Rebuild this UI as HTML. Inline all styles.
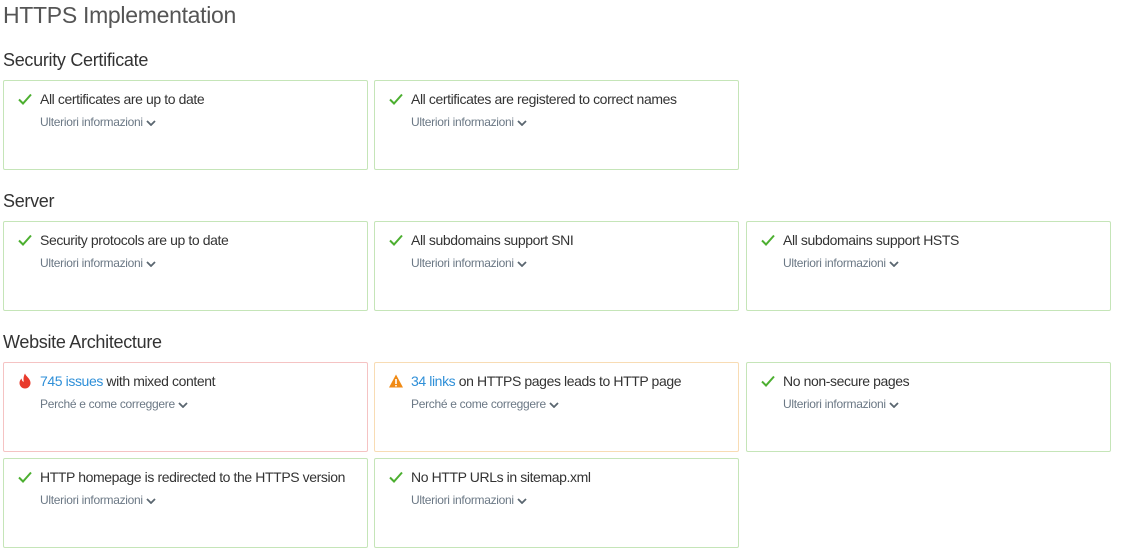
<!DOCTYPE html>
<html><head><style>
body{margin:0;width:1139px;height:525px;overflow:hidden;background:#fff;font-family:"Liberation Sans",sans-serif;color:#333;position:relative}
.t{position:absolute;left:3px;top:2px;font-size:23px;font-weight:300;color:#555;letter-spacing:-0.3px}
.h{position:absolute;left:3px;font-size:18px;color:#333;letter-spacing:-0.3px}
.c{position:absolute;width:363px;height:88px;border:1px solid #c5e5b8;border-radius:2px;box-sizing:content-box}
.c.r{border-color:#f5c3c3}.c.o{border-color:#f8dcb4}
.c .i{position:absolute;left:13px;top:10px;width:16px;height:16px}
.c .m{position:absolute;left:36px;top:10px;font-size:14px;color:#333;letter-spacing:-0.4px;white-space:nowrap}
.c .m a{color:#2e8fd8}
.c .s{position:absolute;left:36px;top:34px;font-size:12px;color:#6b7885;letter-spacing:-0.3px;white-space:nowrap}
.s svg{vertical-align:middle;margin-left:3px}
</style></head><body>
<div class="t">HTTPS Implementation</div>
<div class="h" style="top:50px">Security Certificate</div>
<div class="h" style="top:191px">Server</div>
<div class="h" style="top:332px">Website Architecture</div>

<svg width="0" height="0" style="position:absolute"><defs>
<symbol id="ck" viewBox="0 0 16 16"><path d="M2 8.5l4 4 8-9" fill="none" stroke="#4caf30" stroke-width="2"/></symbol>
<symbol id="dn" viewBox="0 0 10 6"><path d="M1 1l4 4 4-4" fill="none" stroke="#5a6670" stroke-width="1.8"/></symbol>
</defs></svg>

<div class="c" style="left:3px;top:80px"><svg class="i"><use href="#ck"/></svg><div class="m">All certificates are up to date</div><div class="s">Ulteriori informazioni<svg width="10" height="6"><use href="#dn"/></svg></div></div>
<div class="c" style="left:374px;top:80px"><svg class="i"><use href="#ck"/></svg><div class="m">All certificates are registered to correct names</div><div class="s">Ulteriori informazioni<svg width="10" height="6"><use href="#dn"/></svg></div></div>

<div class="c" style="left:3px;top:221px"><svg class="i"><use href="#ck"/></svg><div class="m">Security protocols are up to date</div><div class="s">Ulteriori informazioni<svg width="10" height="6"><use href="#dn"/></svg></div></div>
<div class="c" style="left:374px;top:221px"><svg class="i"><use href="#ck"/></svg><div class="m">All subdomains support SNI</div><div class="s">Ulteriori informazioni<svg width="10" height="6"><use href="#dn"/></svg></div></div>
<div class="c" style="left:746px;top:221px"><svg class="i"><use href="#ck"/></svg><div class="m">All subdomains support HSTS</div><div class="s">Ulteriori informazioni<svg width="10" height="6"><use href="#dn"/></svg></div></div>

<div class="c r" style="left:3px;top:362px"><svg class="i" viewBox="0 0 16 16"><path d="M8 0.5c1 3 5.5 5 5.5 9.5a5.5 5.5 0 0 1-11 0c0-2 1-3.5 2.2-4.5 0 2 1 3.2 2.2 3.2-1-3 0-6.2 1.1-8.2z" fill="#e8392b"/></svg><div class="m"><a>745 issues</a> with mixed content</div><div class="s">Perché e come correggere<svg width="10" height="6"><use href="#dn"/></svg></div></div>
<div class="c o" style="left:374px;top:362px"><svg class="i" viewBox="0 0 16 16"><path d="M8 1.5L15 14.5H1z" fill="#f08a15"/><rect x="7.2" y="6" width="1.6" height="5" fill="#fff"/><rect x="7.2" y="12" width="1.6" height="1.5" fill="#fff"/></svg><div class="m"><a>34 links</a> on HTTPS pages leads to HTTP page</div><div class="s">Perché e come correggere<svg width="10" height="6"><use href="#dn"/></svg></div></div>
<div class="c" style="left:746px;top:362px"><svg class="i"><use href="#ck"/></svg><div class="m">No non-secure pages</div><div class="s">Ulteriori informazioni<svg width="10" height="6"><use href="#dn"/></svg></div></div>

<div class="c" style="left:3px;top:458px"><svg class="i"><use href="#ck"/></svg><div class="m">HTTP homepage is redirected to the HTTPS version</div><div class="s">Ulteriori informazioni<svg width="10" height="6"><use href="#dn"/></svg></div></div>
<div class="c" style="left:374px;top:458px"><svg class="i"><use href="#ck"/></svg><div class="m">No HTTP URLs in sitemap.xml</div><div class="s">Ulteriori informazioni<svg width="10" height="6"><use href="#dn"/></svg></div></div>
</body></html>
